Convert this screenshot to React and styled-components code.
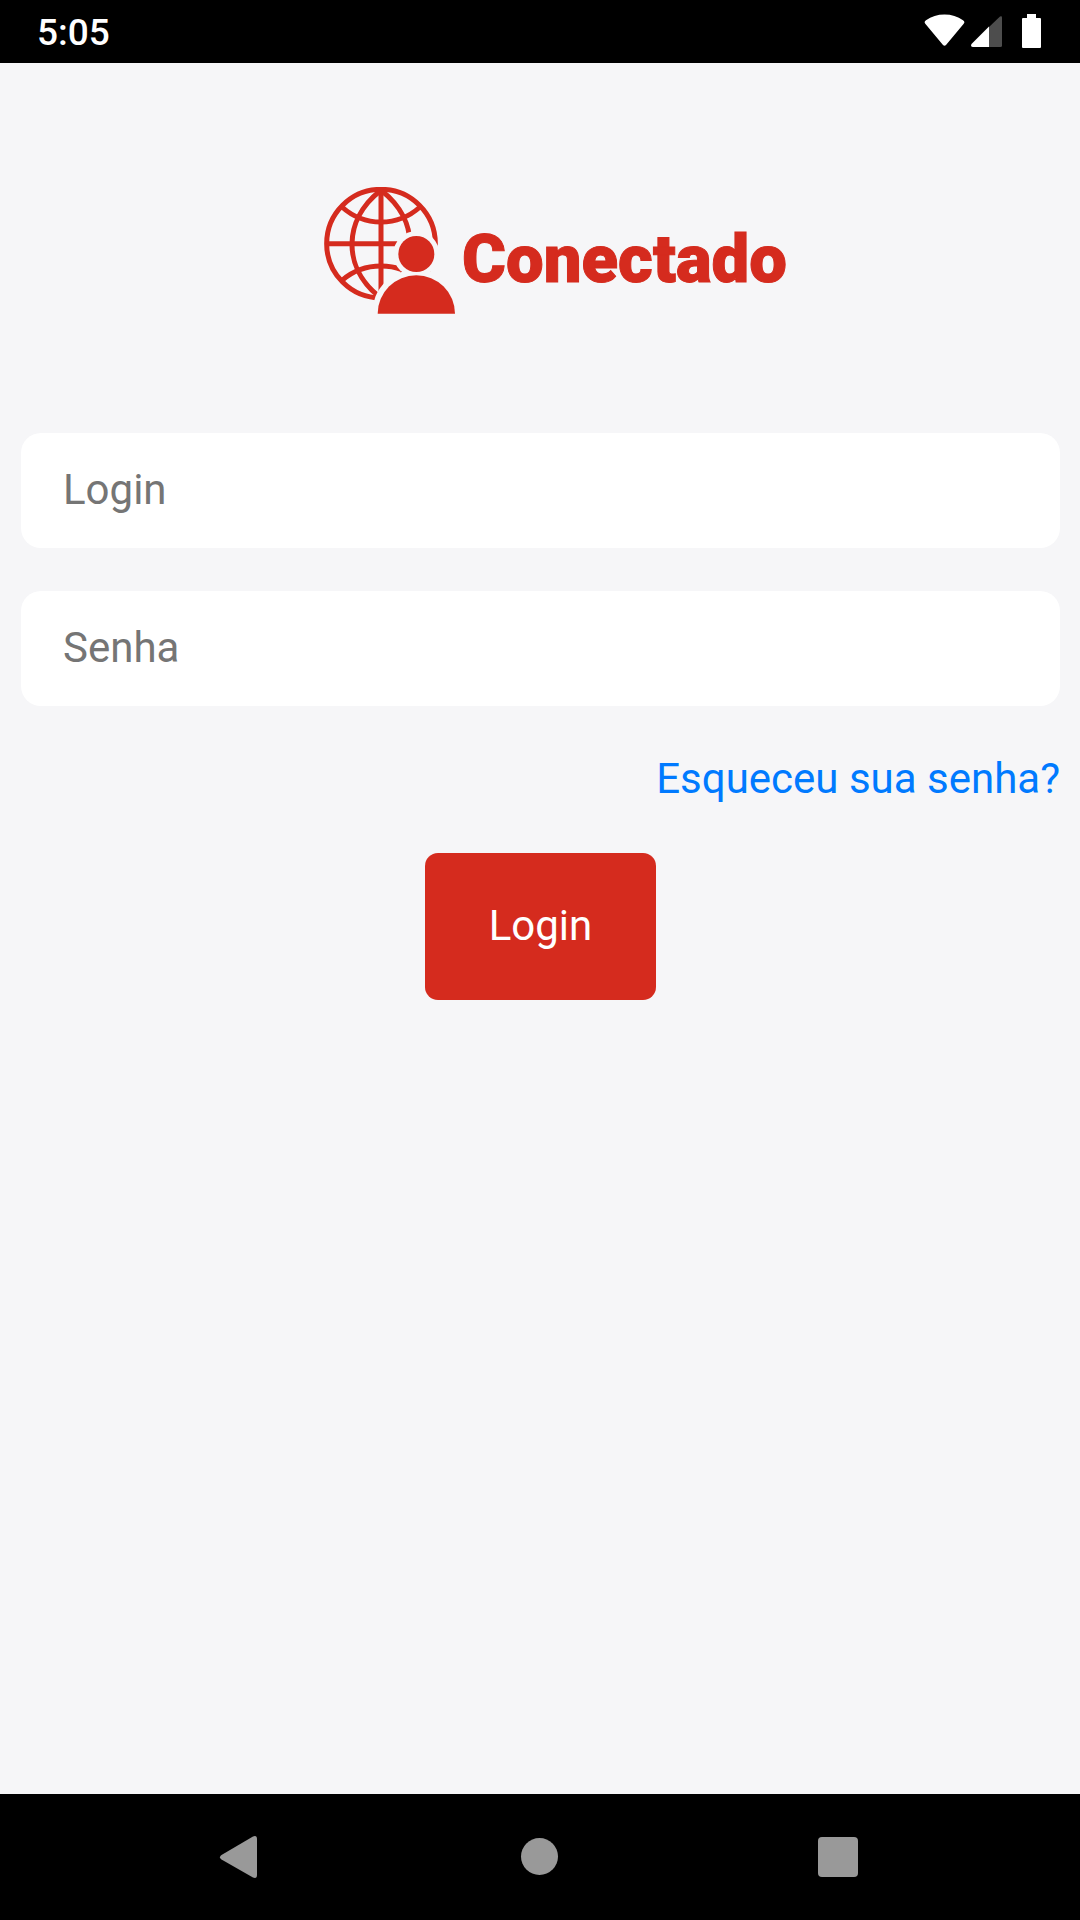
import React, { useState } from "react";
import styled, { createGlobalStyle } from "styled-components";

const StatusBar = () => {
  return (
    <Status>
      <time dateTime="05:05">5:05</time>
      <StatusIcons viewBox="0 0 120 40" aria-hidden="true">
        {/* wifi */}
        <path d="M1.5 11Q-.5 9 2 7.2Q10 1.5 20.500 1.500Q31 1.500 39 7.200Q41.500 9 39.500 11L22 32Q20.500 33.500 19 32Z" />
        {/* signal */}
        <path
          className="dim"
          d="M65 14L76 3.500Q78 2.500 78 4.500V32.500Q78 34 76.500 34H65Z"
        />
        <path d="M65 13.500V34H49Q46 33.500 47.500 31Z" />
        {/* battery */}
        <path d="M103 1H112V5H116Q117 5 117 6V34Q117 35 116 35H99Q98 35 98 34V6Q98 5 99 5H103Z" />
      </StatusIcons>
    </Status>
  );
};

const Logo = () => {
  return (
    <Brand>
      <BrandIcon viewBox="42 50 393 381" aria-hidden="true">
        <defs>
          <mask
            id="globe-mask"
            maskUnits="userSpaceOnUse"
            x="40"
            y="40"
            width="400"
            height="400"
          >
            <rect x="40" y="40" width="400" height="400" fill="#fff" />
            <circle cx="319" cy="251" r="69" fill="#000" />
            <circle cx="319" cy="430" r="133" fill="#000" />
          </mask>
        </defs>
        <g
          mask="url(#globe-mask)"
          fill="none"
          stroke="currentColor"
          strokeWidth="15"
        >
          <circle cx="213" cy="220" r="163" />
          <path d="M213 56V385" />
          <path d="M50 220H378" />
          <path d="M210 62C99 150 99 290 204 376" />
          <path d="M216 62C327 150 327 290 222 376" />
          <path d="M96 110Q146 155 213 155Q280 155 330 110" />
          <path d="M96 330Q146 287 213 287Q280 287 330 330" />
        </g>
        <circle cx="319" cy="251" r="54" fill="currentColor" />
        <path d="M203 430A116 115 0 0 1 435 430Z" fill="currentColor" />
      </BrandIcon>
      <BrandName>Conectado</BrandName>
    </Brand>
  );
};

const NavBar = () => {
  return (
    <Nav>
      <NavButton type="button" aria-label="Voltar">
        <svg viewBox="0 0 72 72">
          <path d="M17.500 34L49 15.500Q53 14 53 18V54Q53 58 49 56.500L17.500 38.500Q14.500 36.200 17.500 34Z" />
        </svg>
      </NavButton>
      <NavButton type="button" aria-label="Início">
        <svg viewBox="0 0 72 72">
          <circle cx="35.500" cy="35.500" r="18.500" />
        </svg>
      </NavButton>
      <NavButton type="button" aria-label="Recentes">
        <svg viewBox="0 0 72 72">
          <rect x="14" y="16" width="40" height="40" rx="4" />
        </svg>
      </NavButton>
    </Nav>
  );
};

const App = () => {
  const [login, setLogin] = useState("");
  const [senha, setSenha] = useState("");

  return (
    <Screen>
      <GlobalStyle />
      <StatusBar />
      <Main>
        <Logo />
        <Form onSubmit={(e) => e.preventDefault()}>
          <Input
            type="text"
            aria-label="Login"
            placeholder="Login"
            value={login}
            onChange={(e) => setLogin(e.target.value)}
          />
          <Input
            type="password"
            aria-label="Senha"
            placeholder="Senha"
            value={senha}
            onChange={(e) => setSenha(e.target.value)}
          />
          <ForgotLink href="#senha">Esqueceu sua senha?</ForgotLink>
          <SubmitButton type="submit">Login</SubmitButton>
        </Form>
      </Main>
      <NavBar />
    </Screen>
  );
};

const GlobalStyle = createGlobalStyle`
  * {
    box-sizing: border-box;
  }
  body {
    margin: 0;
    background: #f6f6f8;
    font-family: Roboto, sans-serif;
  }
`;

const Screen = styled.div`
  min-height: 100vh;
  display: flex;
  flex-direction: column;
`;

const Status = styled.header`
  height: 63px;
  padding: 3px 36px 0 37px;
  display: flex;
  align-items: center;
  justify-content: space-between;
  background: #000;
  color: #fff;
  font-size: 37px;
  font-weight: 500;
  line-height: 44px;
`;

const StatusIcons = styled.svg`
  width: 120px;
  height: 40px;
  fill: #fff;
  .dim {
    fill: #4d4d4d;
  }
`;

const Main = styled.main`
  flex: 1;
  padding: 124px 20px 40px 21px;
`;

const Brand = styled.div`
  display: flex;
  justify-content: center;
  gap: 7px;
  padding-left: 30px;
  margin-bottom: 119px;
  color: #d52b1e;
`;

const BrandIcon = styled.svg`
  width: 131px;
  height: 127px;
`;

const BrandName = styled.h1`
  margin: 0;
  padding-top: 32px;
  font-size: 67px;
  font-weight: 900;
  line-height: 80px;
  -webkit-text-stroke: 1px currentColor;
`;

const Form = styled.form`
  display: flex;
  flex-direction: column;
`;

const Input = styled.input`
  height: 115px;
  margin-bottom: 43px;
  padding: 0 42px 3px;
  border: 0;
  border-radius: 20px;
  background: #fff;
  color: #222;
  font-family: inherit;
  font-size: 42px;
  &::placeholder {
    color: #757575;
    opacity: 1;
  }
`;

const ForgotLink = styled.a`
  align-self: flex-end;
  margin: 5px 0 50px;
  color: #007aff;
  font-size: 42px;
  line-height: 49px;
  text-decoration: none;
`;

const SubmitButton = styled.button`
  align-self: center;
  padding: 48px 64px 50px;
  border: 0;
  border-radius: 13px;
  background: #d52b1e;
  color: #fff;
  font-family: inherit;
  font-size: 42px;
  line-height: 49px;
`;

const Nav = styled.nav`
  height: 126px;
  padding: 0 90px;
  display: flex;
  align-items: center;
  justify-content: space-around;
  background: #000;
`;

const NavButton = styled.button`
  width: 72px;
  height: 72px;
  padding: 0;
  border: 0;
  background: none;
  svg {
    display: block;
    fill: #999;
  }
`;

export default App;
